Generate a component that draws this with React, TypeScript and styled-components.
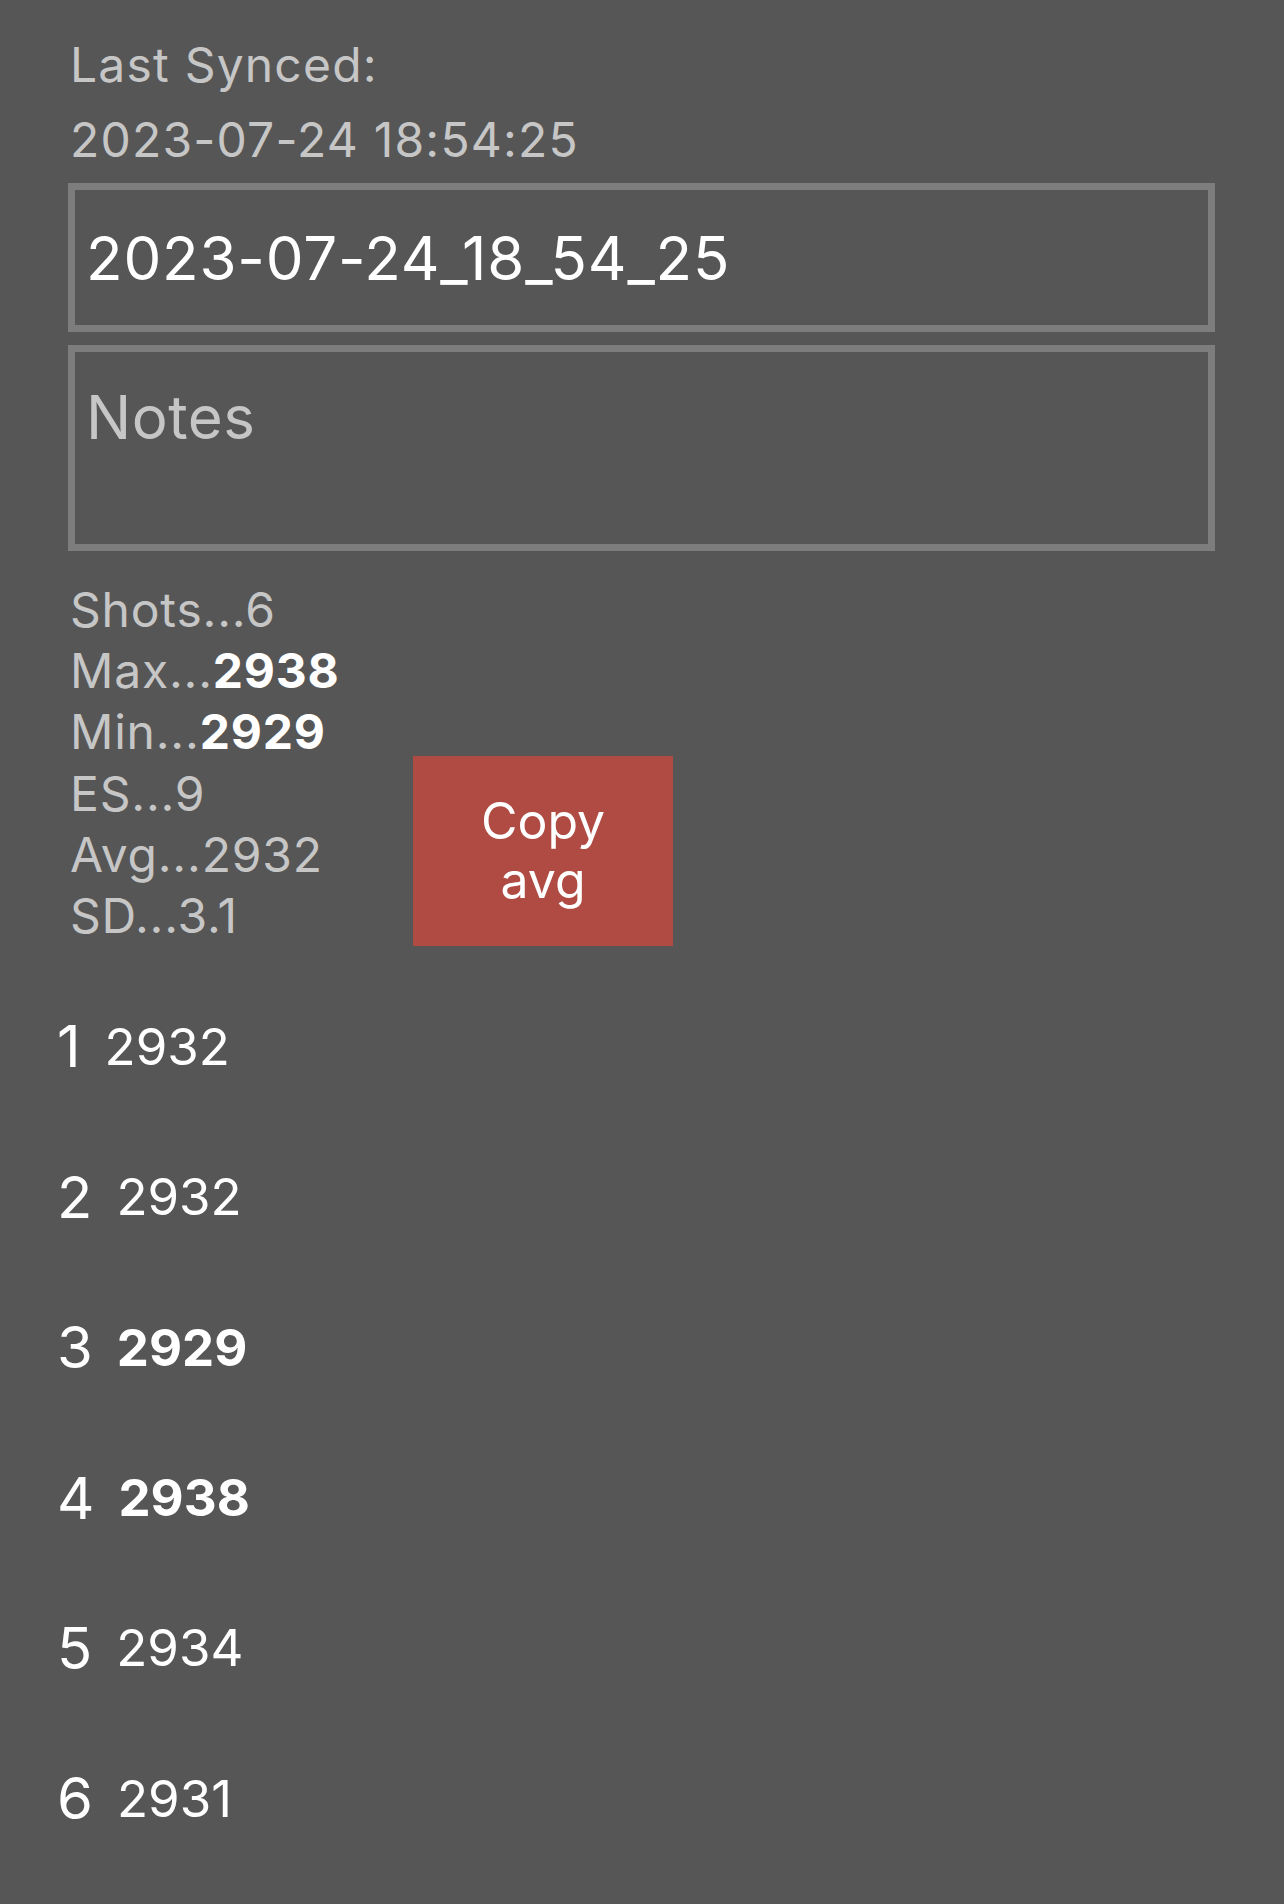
import React from "react";
import styled, { createGlobalStyle } from "styled-components";

const GlobalStyle = createGlobalStyle`
  html, body {
    margin: 0;
    padding: 0;
    background: #565656;
  }
  body {
    font-family: Inter, "Liberation Sans", sans-serif;
  }
`;

const Page = styled.div`
  min-height: 1904px;
  background: #565656;
  box-sizing: border-box;
  padding: 27px 69px 30px 68px;
  display: flex;
  flex-direction: column;
`;

const SyncLabel = styled.div`
  padding-left: 2px;
  font-size: 48px;
  line-height: 75px;
  letter-spacing: 1.2px;
  color: #c6c6c6;
`;

const Field = styled.input`
  box-sizing: border-box;
  width: 100%;
  height: 149px;
  margin-top: 6px;
  border: 7px solid #7d7d7d;
  background: #565656;
  color: #ffffff;
  font-family: Inter, "Liberation Sans", sans-serif;
  font-size: 60px;
  letter-spacing: 0.8px;
  padding: 0 11px;
  outline: none;
  border-radius: 0;
`;

const NotesArea = styled.textarea`
  box-sizing: border-box;
  width: 100%;
  height: 206px;
  margin-top: 13px;
  border: 7px solid #7d7d7d;
  background: #565656;
  color: #ffffff;
  font-family: Inter, "Liberation Sans", sans-serif;
  font-size: 60px;
  letter-spacing: 0.5px;
  line-height: normal;
  padding: 29px 11px 0;
  outline: none;
  resize: none;
  border-radius: 0;
  display: block;
  &::placeholder {
    color: #c6c6c6;
    opacity: 1;
  }
`;

const StatsRow = styled.div`
  display: flex;
  align-items: flex-end;
  margin-top: 28px;
`;

const StatsList = styled.div`
  width: 345px;
  padding-left: 2px;
  box-sizing: border-box;
  display: flex;
  flex-direction: column;
`;

const StatLine = styled.div`
  font-size: 48px;
  line-height: 61.2px;
  letter-spacing: 0.8px;
  color: #c6c6c6;
  white-space: nowrap;
`;

const StatValue = styled.span<{ $strong?: boolean }>`
  color: ${(p) => (p.$strong ? "#ffffff" : "#c6c6c6")};
  font-weight: ${(p) => (p.$strong ? 700 : 400)};
`;

const CopyButton = styled.button`
  width: 260px;
  height: 190px;
  border: none;
  border-radius: 0;
  background: #b04b43;
  color: #ffffff;
  font-family: Inter, "Liberation Sans", sans-serif;
  font-size: 50px;
  line-height: 59px;
  padding: 0;
  cursor: pointer;
`;

const ShotList = styled.div`
  margin-top: 25px;
  margin-left: -11px;
  display: flex;
  flex-direction: column;
`;

const ShotRow = styled.div`
  height: 150.4px;
  display: flex;
  align-items: center;
  color: #ffffff;
`;

const ShotIndex = styled.span`
  font-size: 58px;
  margin-right: 24px;
`;

const ShotValue = styled.span<{ $strong?: boolean }>`
  font-size: 51px;
  font-weight: ${(p) => (p.$strong ? 700 : 400)};
`;

const shots = [2932, 2932, 2929, 2938, 2934, 2931];

export default function App() {
  const max = Math.max(...shots);
  const min = Math.min(...shots);
  return (
    <>
      <GlobalStyle />
      <Page>
        <SyncLabel>Last Synced:</SyncLabel>
        <SyncLabel>2023-07-24 18:54:25</SyncLabel>
        <Field defaultValue="2023-07-24_18_54_25" />
        <NotesArea placeholder="Notes" />
        <StatsRow>
          <StatsList>
            <StatLine>
              Shots...<StatValue>6</StatValue>
            </StatLine>
            <StatLine>
              Max...<StatValue $strong>{max}</StatValue>
            </StatLine>
            <StatLine>
              Min...<StatValue $strong>{min}</StatValue>
            </StatLine>
            <StatLine>
              ES...<StatValue>9</StatValue>
            </StatLine>
            <StatLine>
              Avg...<StatValue>2932</StatValue>
            </StatLine>
            <StatLine>
              SD...<StatValue>3.1</StatValue>
            </StatLine>
          </StatsList>
          <CopyButton>
            Copy
            <br />
            avg
          </CopyButton>
        </StatsRow>
        <ShotList>
          {shots.map((v, i) => (
            <ShotRow key={i}>
              <ShotIndex>{i + 1}</ShotIndex>
              <ShotValue $strong={v === max || v === min}>{v}</ShotValue>
            </ShotRow>
          ))}
        </ShotList>
      </Page>
    </>
  );
}
